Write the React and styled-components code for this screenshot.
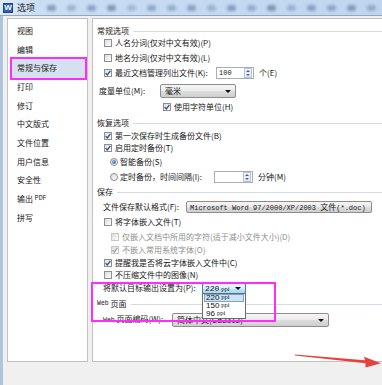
import React from 'react';
import styled, { createGlobalStyle } from 'styled-components';

const Global = createGlobalStyle`
  html, body { margin: 0; padding: 0; background: #f0f0f0; }
  body { font-family: "Noto Sans CJK SC", "Liberation Sans", sans-serif; }
  * { box-sizing: border-box; }
`;

const Screen = styled.div`
  position: relative;
  width: 382px;
  height: 385px;
  overflow: hidden;
  background: #f0f0f0;
  display: flex;
  flex-direction: column;
  font-size: 8px;
  line-height: 1;
  color: #161616;
`;

const TitleBar = styled.div`
  height: 16px;
  flex: none;
  display: flex;
  align-items: center;
  padding-left: 3px;
  background: linear-gradient(90deg, #dfeaf7 0px, #c9ddf3 40px, #bfd6f0 100%);
  border-bottom: 1px solid #93a7be;
  overflow: hidden;
`;

const AppIcon = styled.span`
  width: 10px;
  height: 10px;
  flex: none;
  display: flex;
  align-items: center;
  justify-content: center;
  background: #2c62b4;
  border: 1px solid #1d4789;
  color: #fff;
  font-family: "Liberation Sans", sans-serif;
  font-weight: 700;
  font-size: 8px;
`;

const Title = styled.span`
  flex: none;
  white-space: nowrap;
  margin-left: 4px;
  font-size: 9px;
  line-height: 12px;
  color: #1b2430;
`;

const Blobs = styled.span`
  flex: none;
  display: flex;
  gap: 11px;
  margin-left: 12px;
  align-items: center;
`;

const Blob = styled.span`
  flex: none;
  width: 9px;
  height: 6px;
  border-radius: 3px;
  background: #4f6b8d;
  filter: blur(1.6px);
  opacity: ${p => p.$o};
`;

const Window = styled.div`
  flex: 1;
  display: flex;
  flex-direction: column;
  border-left: 3px solid #afc5de;
  padding: 2px 0 0 4px;
`;

const Body = styled.div`
  flex: none;
  height: 344px;
  display: flex;
  gap: 4px;
`;

const Sidebar = styled.div`
  width: 81px;
  flex: none;
  background: #fff;
  border: 1px solid #c2c2c2;
  padding: 2.6px 2px 0 4px;
  display: flex;
  flex-direction: column;
`;

const SideItem = styled.div`
  height: 18.7px;
  display: flex;
  align-items: center;
  padding-left: 5px;
  white-space: nowrap;
  background: ${p => (p.$active ? '#d6e0ee' : 'transparent')};
  outline: ${p => (p.$active ? '2px solid #ff2bff' : 'none')};
`;

const Panel = styled.div`
  position: relative;
  width: 300px;
  flex: none;
  background: #fff;
  border: 1px solid #c2c2c2;
  padding-left: 4px;
  display: flex;
  flex-direction: column;
`;

const GroupTitle = styled.div`
  height: 12px;
  display: flex;
  align-items: center;
  white-space: nowrap;
  margin-top: ${p => p.$mt || 0}px;
  &::after {
    content: '';
    flex: 1;
    border-top: 1px solid #d5dbe2;
    margin-left: 4px;
  }
`;

const Row = styled.div`
  height: 12px;
  display: flex;
  align-items: center;
  margin-top: ${p => p.$mt || 0}px;
  padding-left: ${p => p.$indent || 0}px;
  color: ${p => (p.$disabled ? '#8e8e8e' : 'inherit')};
  white-space: nowrap;
`;

const Label = styled.span`
  width: ${p => p.$w}px;
  flex: none;
  white-space: nowrap;
`;

const After = styled.span`
  margin-left: 5px;
`;

const Mono = styled.span`
  font-family: "Liberation Mono", "DejaVu Sans Mono", monospace;
  font-size: ${p => p.$size || 7}px;
`;

const CheckBox = styled.span`
  width: 8px;
  height: 8px;
  flex: none;
  margin-right: 3px;
  border: 1px solid ${p => (p.$disabled ? '#c6c6c6' : '#8e8f8f')};
  background: linear-gradient(135deg, #dcdcdc, #ffffff);
  display: flex;
  align-items: center;
  justify-content: center;
`;

const RadioCircle = styled.span`
  width: 8px;
  height: 8px;
  flex: none;
  margin-right: 2px;
  border-radius: 50%;
  border: 1px solid #8e8f8f;
  background: linear-gradient(135deg, #d8d8d8, #ffffff);
  display: flex;
  align-items: center;
  justify-content: center;
  &::after {
    content: '';
    display: ${p => (p.$on ? 'block' : 'none')};
    width: 4px;
    height: 4px;
    border-radius: 50%;
    background: radial-gradient(circle at 35% 35%, #8fb8ec, #1f4f9c);
  }
`;

const Spin = styled.span`
  width: ${p => p.$w}px;
  height: 12px;
  flex: none;
  display: flex;
  border: 1px solid #abadb3;
  background: #fff;
`;

const SpinValue = styled.span`
  flex: 1;
  display: flex;
  align-items: center;
  padding-left: 2px;
  font-family: "Liberation Mono", monospace;
  font-size: 7px;
`;

const SpinButtons = styled.span`
  width: 8px;
  display: flex;
  flex-direction: column;
  border: 1px solid #b7c4d6;
  margin: 0 1px 0 0;
`;

const SpinBtn = styled.span`
  flex: 1;
  display: flex;
  align-items: center;
  justify-content: center;
  background: linear-gradient(#f6f8fb, #dfe6ee);
  &::before {
    content: '';
    border-left: 2px solid transparent;
    border-right: 2px solid transparent;
    ${p => (p.$up ? 'border-bottom: 2px solid #4a6088;' : 'border-top: 2px solid #4a6088;')}
  }
`;

const Select = styled.span`
  position: relative;
  width: ${p => p.$w}px;
  height: ${p => p.$h || 14}px;
  flex: none;
  display: flex;
  align-items: center;
  justify-content: space-between;
  padding: 0 4px 0 ${p => p.$pl || 4}px;
  border: 1px solid ${p => (p.$focus ? '#3c7fb1' : '#8d8d8d')};
  border-radius: 2px;
  background: ${p =>
    p.$focus
      ? 'linear-gradient(#eaf6fd 0%, #d9effc 50%, #bee6fd 51%, #a7d9f5 100%)'
      : 'linear-gradient(#f5f5f5 0%, #ebebeb 50%, #dddddd 51%, #cfcfcf 100%)'};
`;

const SelectText = styled.span`
  white-space: nowrap;
  line-height: 10px;
`;

const Arrow = styled.span`
  flex: none;
  border-left: 3px solid transparent;
  border-right: 3px solid transparent;
  border-top: 3px solid #111;
`;

const DropList = styled.div`
  position: absolute;
  top: 100%;
  left: -1px;
  width: 44px;
  height: 26px;
  background: #fff;
  border: 1px solid #6a6a6a;
  z-index: 3;
  display: flex;
  flex-direction: column;
  padding: 0 1px;
`;

const DropItem = styled.div`
  height: 8px;
  display: flex;
  align-items: center;
  gap: 2px;
  padding-left: 1px;
  background: ${p => (p.$sel ? '#cfe3f8' : 'transparent')};
  border: 1px solid ${p => (p.$sel ? '#7da2ce' : 'transparent')};
  font-family: "Liberation Sans", sans-serif;
  font-size: 8px;
  color: #111;
`;

const Ppi = styled.span`
  font-family: "Liberation Serif", serif;
  font-size: 6.5px;
`;

const Mark = styled.div`
  position: absolute;
  left: -2px;
  top: 263px;
  width: 185px;
  height: 40px;
  border: 2px solid #ff2bff;
  z-index: 4;
  pointer-events: none;
`;

const Footer = styled.div`
  flex: 1;
`;

const ArrowSvg = styled.svg`
  position: absolute;
  left: 0;
  top: 0;
  z-index: 5;
  pointer-events: none;
`;

const Check = ({ checked, disabled }) => (
  <CheckBox $disabled={disabled}>
    {checked && (
      <svg width="6" height="6" viewBox="0 0 6 6">
        <path
          d="M0.6 3.1 L2.3 4.9 L5.4 0.8"
          fill="none"
          stroke={disabled ? '#a0a0a0' : '#2f4f93'}
          strokeWidth="1.3"
        />
      </svg>
    )}
  </CheckBox>
);

const SpinInput = ({ value, w }) => (
  <Spin $w={w}>
    <SpinValue>{value}</SpinValue>
    <SpinButtons>
      <SpinBtn $up />
      <SpinBtn />
    </SpinButtons>
  </Spin>
);

const sideItems = ['视图', '编辑', '常规与保存', '打印', '修订', '中文版式', '文件位置', '用户信息', '安全性', '输出 PDF', '拼写'];
const blobs = [0.55, 0.35, 0.5, 0.6, 0.3, 0.45, 0.4, 0.5, 0.35, 0.55, 0.4, 0.6, 0.35, 0.5, 0.45, 0.55, 0.4];

export default function App() {
  return (
    <>
      <Global />
      <Screen>
        <TitleBar>
          <AppIcon>W</AppIcon>
          <Title>选项</Title>
          <Blobs>
            {blobs.map((o, i) => (
              <Blob key={i} $o={o} />
            ))}
          </Blobs>
        </TitleBar>
        <Window>
          <Body>
            <Sidebar>
              {sideItems.map(t => (
                <SideItem key={t} $active={t === '常规与保存'}>
                  {t === '输出 PDF' ? (
                    <>
                      输出&nbsp;<Mono $size={6.5}>PDF</Mono>
                    </>
                  ) : (
                    t
                  )}
                </SideItem>
              ))}
            </Sidebar>
            <Panel>
              <GroupTitle $mt={6}>常规选项</GroupTitle>
              <Row $indent={7}>
                <Check />人名分词(仅对中文有效)(P)
              </Row>
              <Row $indent={7} $mt={3}>
                <Check />地名分词(仅对中文有效)(L)
              </Row>
              <Row $indent={7} $mt={3}>
                <Check checked />
                <Label $w={101}>最近文档管理列出文件(K):</Label>
                <SpinInput value="100" w={38} />
                <After>个(E)</After>
              </Row>
              <Row $indent={2} $mt={6}>
                <Label $w={61}>度量单位(M):</Label>
                <Select $w={76}>
                  <SelectText>毫米</SelectText>
                  <Arrow />
                </Select>
              </Row>
              <Row $indent={66} $mt={4}>
                <Check checked />使用字符单位(H)
              </Row>

              <GroupTitle $mt={4}>恢复选项</GroupTitle>
              <Row $indent={7} $mt={1}>
                <Check checked />第一次保存时生成备份文件(B)
              </Row>
              <Row $indent={7}>
                <Check checked />启用定时备份(T)
              </Row>
              <Row $indent={13} $mt={2}>
                <RadioCircle $on />智能备份(S)
              </Row>
              <Row $indent={13} $mt={3}>
                <RadioCircle />
                <Label $w={94}>定时备份，时间间隔(I):</Label>
                <SpinInput value="" w={39} />
                <After>分钟(M)</After>
              </Row>

              <GroupTitle $mt={3}>保存</GroupTitle>
              <Row $indent={6} $mt={3}>
                <Label $w={83}>文件保存默认格式(F):</Label>
                <Select $w={186} $h={12} $pl={3}>
                  <SelectText>
                    <Mono>Microsoft Word 97/2000/XP/2003 </Mono>文件<Mono>(*.doc)</Mono>
                  </SelectText>
                </Select>
              </Row>
              <Row $indent={7} $mt={3}>
                <Check />将字体嵌入文件(T)
              </Row>
              <Row $indent={14} $mt={3} $disabled>
                <Check disabled />仅嵌入文档中所用的字符(适于减小文件大小)(D)
              </Row>
              <Row $indent={14} $mt={1} $disabled>
                <Check checked disabled />不嵌入常用系统字体(O)
              </Row>
              <Row $indent={7} $mt={1}>
                <Check checked />提醒我是否将云字体嵌入文件中(C)
              </Row>
              <Row $indent={7}>
                <Check />不压缩文件中的图像(N)
              </Row>
              <Row $indent={6} $mt={1}>
                <Label $w={99}>将默认目标输出设置为(P):</Label>
                <Select $w={44} $h={11} $focus $pl={2}>
                  <SelectText>
                    <Mono $size={8}>220</Mono> <Ppi>ppi</Ppi>
                  </SelectText>
                  <Arrow />
                  <DropList>
                    <DropItem $sel>
                      220 <Ppi>ppi</Ppi>
                    </DropItem>
                    <DropItem>
                      150 <Ppi>ppi</Ppi>
                    </DropItem>
                    <DropItem>
                      96 <Ppi>ppi</Ppi>
                    </DropItem>
                  </DropList>
                </Select>
              </Row>

              <GroupTitle $mt={4}>
                <Mono $size={6.5}>Web</Mono>&nbsp;页面
              </GroupTitle>
              <Row $indent={6} $mt={4}>
                <Label $w={69}>
                  <Mono $size={6.5}>Web</Mono> 页面编码(W):
                </Label>
                <Select $w={157}>
                  <SelectText>简体中文(GB2312)</SelectText>
                  <Arrow />
                </Select>
              </Row>
              <Mark />
            </Panel>
          </Body>
          <Footer />
        </Window>
        <ArrowSvg width="382" height="385" viewBox="0 0 382 385">
          <polygon
            points="295,354.4 365,360.2 364,356.8 381,363.2 365.5,367.6 365.5,363.2 295,355.6"
            fill="#e8413b"
          />
        </ArrowSvg>
      </Screen>
    </>
  );
}
